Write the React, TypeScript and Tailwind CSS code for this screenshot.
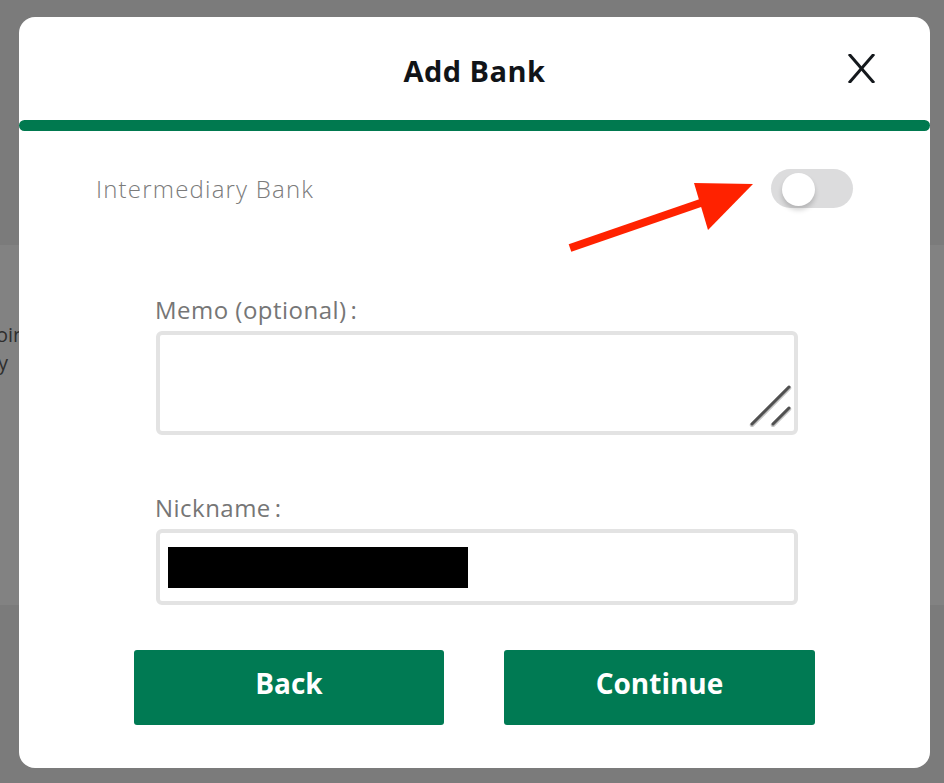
import { useState } from "react";

const font = { fontFamily: '"Open Sans", "Liberation Sans", sans-serif' };

function Toggle({ on, onChange }: { on: boolean; onChange: (v: boolean) => void }) {
  return (
    <button
      onClick={() => onChange(!on)}
      className={`relative w-[82px] h-[39px] rounded-full transition-colors ${
        on ? "bg-[#007a53]" : "bg-[#dcdcdd]"
      }`}
    >
      <span
        className={`absolute top-[4px] w-[33px] h-[33px] rounded-full bg-white shadow-[0_4px_5px_rgba(0,0,0,0.18)] transition-all ${
          on ? "left-[45px]" : "left-[11px]"
        }`}
      />
    </button>
  );
}

function ResizeHandle() {
  return (
    <svg
      className="absolute right-[2px] bottom-[4px]"
      width="44"
      height="44"
      viewBox="0 0 44 44"
    >
      <line x1="4" y1="42" x2="41" y2="5" stroke="#c4c4c4" strokeWidth="4.5" strokeLinecap="round" />
      <line x1="4" y1="41" x2="41" y2="4" stroke="#505050" strokeWidth="3" strokeLinecap="round" />
      <line x1="25" y1="42" x2="41" y2="26" stroke="#c4c4c4" strokeWidth="4.5" strokeLinecap="round" />
      <line x1="25" y1="41" x2="41" y2="25" stroke="#505050" strokeWidth="3" strokeLinecap="round" />
    </svg>
  );
}

export default function App() {
  const [intermediary, setIntermediary] = useState(false);
  const [memo, setMemo] = useState("");

  return (
    <div className="relative w-[944px] h-[783px] overflow-hidden bg-[#7b7b7b]" style={font}>
      {/* Page behind the overlay */}
      <div className="flex flex-col h-full">
        <div className="h-[245px]" />
        <div className="h-[360px] bg-[#828282] pt-[76px] text-[20px] leading-[28px] text-[#2e2e2e]">
          <p className="-ml-[4px]">oin</p>
          <p className="-ml-[2px]">y</p>
        </div>
        <div className="flex-1" />
      </div>

      {/* Modal */}
      <div className="absolute left-[19px] top-[17px] w-[911px] h-[751px] bg-white rounded-[16px] flex flex-col">
        {/* Header */}
        <div className="relative h-[103px] flex items-center justify-center pt-[4px]">
          <h2 className="text-[29px] font-bold text-[#111418] tracking-[0.015em]">Add Bank</h2>
          <button className="absolute left-[828px] top-[37px]" aria-label="Close">
            <svg width="29" height="29" viewBox="0 0 29 29">
              <line x1="2" y1="0" x2="27" y2="29" stroke="#14181c" strokeWidth="3" />
              <line x1="27" y1="0" x2="2" y2="29" stroke="#14181c" strokeWidth="3" />
            </svg>
          </button>
        </div>
        <div className="h-[11px] rounded-full bg-[#00794f]" />

        {/* Intermediary toggle */}
        <div className="mt-[38px] px-[77px] flex items-center justify-between">
          <span className="text-[24px] font-light text-[#7b7b7b] tracking-[0.05em]">
            Intermediary Bank
          </span>
          <Toggle on={intermediary} onChange={setIntermediary} />
        </div>

        {/* Fields */}
        <div className="ml-[137px] w-[642px] mt-[87px] flex flex-col">
          <label className="text-[24px] leading-[30px] text-[#767676] tracking-[0.02em] -ml-[1px]">
            Memo (optional)<span className="ml-[4px]">:</span>
          </label>
          <div className="relative mt-[6px] h-[104px] rounded-[6px] border-[4px] border-[#e3e3e3]">
            <textarea
              value={memo}
              onChange={(e) => setMemo(e.target.value)}
              className="w-full h-full resize-none outline-none px-3 py-2 text-[20px]"
            />
            <ResizeHandle />
          </div>

          <label className="mt-[58px] text-[24px] leading-[30px] text-[#767676] tracking-[0.02em] -ml-[1px]">
            Nickname<span className="ml-[4px]">:</span>
          </label>
          <div className="mt-[6px] h-[76px] rounded-[6px] border-[4px] border-[#e3e3e3] flex items-center pl-[8px]">
            <div className="w-[300px] h-[41px] bg-black" />
          </div>
        </div>

        {/* Actions */}
        <div className="mt-[45px] flex justify-center gap-[60px]">
          <button className="w-[310px] h-[75px] rounded-[3px] bg-[#007a53] text-white text-[28px] font-bold pb-[9px]">
            Back
          </button>
          <button className="w-[311px] h-[75px] rounded-[3px] bg-[#007a53] text-white text-[28px] font-bold pb-[9px]">
            Continue
          </button>
        </div>
      </div>

      {/* Annotation arrow */}
      <svg className="absolute left-0 top-0 pointer-events-none" width="944" height="783">
        <line x1="570" y1="248" x2="715" y2="198" stroke="#ff2200" strokeWidth="8" />
        <polygon points="694,183 753,184 708,230" fill="#ff2200" />
      </svg>
    </div>
  );
}
